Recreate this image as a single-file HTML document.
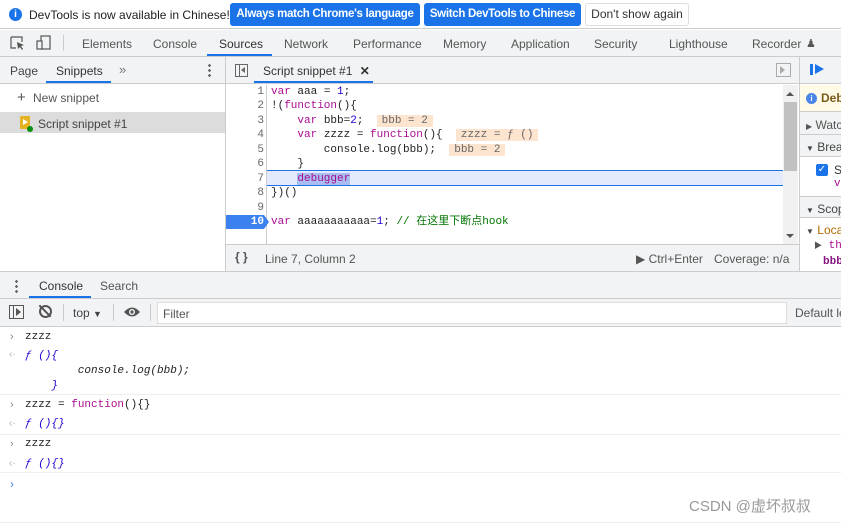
<!DOCTYPE html><html><head><meta charset="utf-8"><style>
*{margin:0;padding:0;box-sizing:border-box}
body{width:841px;height:523px;overflow:hidden;background:#fff;font-family:"Liberation Sans",sans-serif;font-size:12px;color:#333;position:relative}
.a{position:absolute;white-space:nowrap}
.m{font-family:"Liberation Mono","Noto Sans CJK SC",monospace;font-size:11px;white-space:pre}
.k{color:#aa0d91}.n{color:#1c00cf}.c{color:#007400}
.bd{background:#fde4cf;color:#666;padding:0 5px}
.t{font-size:12px;color:#555;top:37px}
</style></head><body>
<!-- infobar -->
<div class="a" style="left:0;top:0;width:841px;height:29px;border-bottom:1px solid #ccc;background:#fff"></div>
<div class="a" style="left:9px;top:8px;width:13px;height:13px;border-radius:50%;background:#1a73e8;color:#fff;font-size:10px;font-weight:bold;text-align:center;line-height:13px">i</div>
<div class="a" style="left:29px;top:8px;font-size:12px;color:#222">DevTools is now available in Chinese!</div>
<div class="a" style="left:230px;top:3px;width:190px;height:23px;background:#1a73e8;border-radius:3px;color:#fff;font-weight:bold;font-size:11.5px;line-height:23px;text-align:center;letter-spacing:-0.3px">Always match Chrome's language</div>
<div class="a" style="left:424px;top:3px;width:157px;height:23px;background:#1a73e8;border-radius:3px;color:#fff;font-weight:bold;font-size:11.5px;line-height:23px;text-align:center;letter-spacing:-0.3px">Switch DevTools to Chinese</div>
<div class="a" style="left:585px;top:3px;width:104px;height:23px;border:1px solid #ddd;border-radius:3px;color:#333;font-size:12px;line-height:21px;text-align:center">Don't show again</div>
<!-- main tabs -->
<div class="a" style="left:0;top:30px;width:841px;height:27px;background:#f1f3f4;border-bottom:1px solid #ccc"></div>
<svg class="a" style="left:10px;top:36px" width="16" height="15"><path d="M1 1h11v5M1 1v11h5" stroke="#555" fill="none" stroke-width="1.2"/><path d="M7 6l7 3-3 1 2 3-1 1-2-3-2 2z" fill="#555"/></svg>
<svg class="a" style="left:36px;top:35px" width="16" height="16"><rect x="5" y="1" width="9" height="13" stroke="#555" fill="none" stroke-width="1.2"/><rect x="1" y="6" width="5" height="8" stroke="#555" fill="#f1f3f4" stroke-width="1.2"/></svg>
<div class="a" style="left:63px;top:35px;width:1px;height:16px;background:#ccc"></div>
<div class="a t" style="left:82px">Elements</div>
<div class="a t" style="left:153px">Console</div>
<div class="a t" style="left:219px;color:#333">Sources</div>
<div class="a" style="left:207px;top:54px;width:65px;height:2px;background:#1a73e8"></div>
<div class="a t" style="left:284px">Network</div>
<div class="a t" style="left:353px">Performance</div>
<div class="a t" style="left:443px">Memory</div>
<div class="a t" style="left:511px">Application</div>
<div class="a t" style="left:594px">Security</div>
<div class="a t" style="left:669px">Lighthouse</div>
<div class="a t" style="left:752px">Recorder</div>
<div class="a" style="left:806px;top:37px;color:#555;font-size:11px">♟</div>
<!-- left panel -->
<div class="a" style="left:0;top:57px;width:225px;height:27px;background:#f1f3f4;border-bottom:1px solid #ccc"></div>
<div class="a" style="left:225px;top:57px;width:1px;height:214px;background:#ccc"></div>
<div class="a" style="left:10px;top:64px;color:#444;font-size:12px">Page</div>
<div class="a" style="left:56px;top:64px;color:#333;font-size:12px">Snippets</div>
<div class="a" style="left:46px;top:81px;width:65px;height:2px;background:#1a73e8"></div>
<div class="a" style="left:119px;top:62px;color:#777;font-size:13px">»</div>
<div class="a" style="left:208px;top:63px;width:3px;height:14px;background:radial-gradient(circle,#666 1.3px,transparent 1.4px) 0 0/3px 5px"></div>
<div class="a" style="left:17px;top:89px;color:#555;font-size:15px">+</div>
<div class="a" style="left:33px;top:91px;color:#555;font-size:12px">New snippet</div>
<div class="a" style="left:0;top:112px;width:225px;height:21px;background:#dcdcdc"></div>
<div class="a" style="left:20px;top:116px;width:10px;height:13px;background:#e6b422;border-radius:1px"></div>
<div class="a" style="left:23px;top:119px;width:0;height:0;border-left:5px solid #fff;border-top:3px solid transparent;border-bottom:3px solid transparent"></div>
<div class="a" style="left:27px;top:126px;width:6px;height:6px;border-radius:50%;background:#0a8f0a"></div>
<div class="a" style="left:38px;top:117px;color:#444;font-size:12px">Script snippet #1</div>
<!-- editor tab bar -->
<div class="a" style="left:226px;top:57px;width:573px;height:27px;background:#f1f3f4;border-bottom:1px solid #ccc"></div>
<div class="a" style="left:235px;top:64px;width:13px;height:13px;border:1px solid #666"></div>
<div class="a" style="left:239px;top:64px;width:1px;height:13px;background:#666"></div>
<div class="a" style="left:241px;top:67px;border-right:4px solid #666;border-top:3px solid transparent;border-bottom:3px solid transparent"></div>
<div class="a" style="left:263px;top:64px;color:#333;font-size:12px">Script snippet #1 <b style="margin-left:4px">✕</b></div>
<div class="a" style="left:254px;top:81px;width:119px;height:2px;background:#1a73e8"></div>
<div class="a" style="left:776px;top:63px;width:15px;height:14px;border:1px solid #aaa"></div>
<div class="a" style="left:780px;top:66px;border-left:5px solid #aaa;border-top:4px solid transparent;border-bottom:4px solid transparent"></div>
<!-- code -->
<div class="a" style="left:266px;top:85px;width:1px;height:159px;background:#ccc"></div>
<div class="a" style="left:267px;top:170px;width:516px;height:16px;background:#e3eafb;border-top:1px solid #1a73e8;border-bottom:1px solid #1a73e8"></div>
<div class="a" style="left:226px;top:215px;width:38px;height:14px;background:#3b82f0"></div>
<div class="a" style="left:264px;top:215px;border-left:5px solid #3b82f0;border-top:7px solid transparent;border-bottom:7px solid transparent"></div>
<div class="a m" style="left:226px;top:85px;width:38px;text-align:right;color:#666;line-height:14.45px">1
2
3
4
5
6
7
8
9
<b style="color:#fff">10</b></div>
<div class="a m" style="left:271px;top:85px;line-height:14.45px;color:#222"><span class="k">var</span> aaa = <span class="n">1</span>;
!(<span class="k">function</span>(){
    <span class="k">var</span> bbb=<span class="n">2</span>;  <span class="bd">bbb = 2</span>
    <span class="k">var</span> zzzz = <span class="k">function</span>(){  <span class="bd">zzzz = ƒ ()</span>
        console.log(bbb);  <span class="bd">bbb = 2</span>
    }
    <span class="k" style="background:#a8bdf0">debugger</span>
})()

<span class="k">var</span> aaaaaaaaaaa=<span class="n">1</span>; <span class="c">// 在这里下断点hook</span></div>
<!-- scrollbar -->
<div class="a" style="left:783px;top:85px;width:15px;height:159px;background:#f1f1f1"></div>
<div class="a" style="left:786px;top:92px;border-bottom:4px solid #555;border-left:4px solid transparent;border-right:4px solid transparent"></div>
<div class="a" style="left:784px;top:102px;width:13px;height:69px;background:#c1c1c1"></div>
<div class="a" style="left:786px;top:234px;border-top:4px solid #555;border-left:4px solid transparent;border-right:4px solid transparent"></div>
<!-- status -->
<div class="a" style="left:226px;top:244px;width:573px;height:27px;background:#f1f3f4;border-top:1px solid #ccc"></div>
<div class="a" style="left:235px;top:250px;color:#555;font-weight:bold;font-size:12px">{ }</div>
<div class="a" style="left:265px;top:252px;color:#555;font-size:12px">Line 7, Column 2</div>
<div class="a" style="left:636px;top:252px;color:#555;font-size:12px">▶ Ctrl+Enter</div>
<div class="a" style="left:714px;top:252px;color:#555;font-size:12px">Coverage: n/a</div>
<!-- right panel -->
<div class="a" style="left:799px;top:57px;width:1px;height:214px;background:#ccc"></div>
<div class="a" style="left:800px;top:57px;width:41px;height:27px;background:#f1f3f4;border-bottom:1px solid #ccc"></div>
<div class="a" style="left:810px;top:64px;width:3px;height:11px;background:#1a73e8"></div>
<div class="a" style="left:815px;top:64px;border-left:9px solid #1a73e8;border-top:5.5px solid transparent;border-bottom:5.5px solid transparent"></div>
<div class="a" style="left:800px;top:85px;width:41px;height:27px;background:#fffbe6;border-bottom:1px solid #ccc"></div>
<div class="a" style="left:806px;top:93px;width:11px;height:11px;border-radius:50%;background:#4a86e8;color:#fff;font-size:8px;font-weight:bold;text-align:center;line-height:11px">i</div>
<div class="a" style="left:821px;top:91px;color:#7a5a1a;font-weight:bold;font-size:12px">Deb</div>
<div class="a" style="left:800px;top:112px;width:41px;height:23px;background:#f1f3f4;border-bottom:1px solid #ccc"></div>
<div class="a" style="left:806px;top:118px;color:#555;font-size:12px"><span style="font-size:8px">▶</span> Watc</div>
<div class="a" style="left:800px;top:135px;width:41px;height:22px;background:#f1f3f4;border-bottom:1px solid #ccc"></div>
<div class="a" style="left:806px;top:140px;color:#444;font-size:12px"><span style="font-size:8px">▼</span> Brea</div>
<div class="a" style="left:816px;top:164px;width:12px;height:12px;background:#1a73e8;border-radius:2px;color:#fff;font-size:10px;text-align:center;line-height:12px">✓</div>
<div class="a" style="left:834px;top:163px;color:#333">S</div>
<div class="a m" style="left:834px;top:178px;color:#aa0d91">v</div>
<div class="a" style="left:800px;top:196px;width:41px;height:22px;background:#f1f3f4;border-top:1px solid #ccc;border-bottom:1px solid #ccc"></div>
<div class="a" style="left:806px;top:202px;color:#444;font-size:12px"><span style="font-size:8px">▼</span> Scop</div>
<div class="a" style="left:806px;top:223px;color:#444;font-size:12px"><span style="font-size:8px">▼</span> <span style="color:#b36b00">Loca</span></div>
<div class="a m" style="left:814px;top:240px;color:#555"><span style="font-size:8px">▶</span> <span class="k">thi</span></div>
<div class="a m" style="left:823px;top:256px;color:#881280;font-weight:bold">bbb</div>
<!-- drawer -->
<div class="a" style="left:0;top:271px;width:841px;height:28px;background:#f1f3f4;border-top:1px solid #ccc;border-bottom:1px solid #ccc"></div>
<div class="a" style="left:15px;top:279px;width:3px;height:14px;background:radial-gradient(circle,#666 1.3px,transparent 1.4px) 0 0/3px 5px"></div>
<div class="a" style="left:39px;top:279px;color:#333;font-size:12px">Console</div>
<div class="a" style="left:29px;top:296px;width:62px;height:2px;background:#1a73e8"></div>
<div class="a" style="left:100px;top:279px;color:#555;font-size:12px">Search</div>
<div class="a" style="left:0;top:299px;width:841px;height:28px;background:#f1f3f4;border-bottom:1px solid #ccc"></div>
<div class="a" style="left:9px;top:305px;width:15px;height:14px;border:1px solid #555"></div>
<div class="a" style="left:13px;top:305px;width:1px;height:14px;background:#555"></div>
<div class="a" style="left:16px;top:308px;border-left:5px solid #555;border-top:4px solid transparent;border-bottom:4px solid transparent"></div>
<div class="a" style="left:39px;top:305px;width:13px;height:13px;border:2px solid #555;border-radius:50%"></div>
<div class="a" style="left:44px;top:303px;width:2px;height:16px;background:#555;transform:rotate(-45deg)"></div>
<div class="a" style="left:63px;top:304px;width:1px;height:17px;background:#ccc"></div>
<div class="a" style="left:73px;top:306px;color:#444;font-size:12px">top <span style="font-size:9px">▼</span></div>
<div class="a" style="left:113px;top:304px;width:1px;height:17px;background:#ccc"></div>
<svg class="a" style="left:123px;top:305px" width="18" height="14"><path d="M1 7Q9-2 17 7Q9 16 1 7z" fill="#555"/><circle cx="9" cy="7" r="3" fill="#f1f3f4"/><circle cx="9" cy="7" r="1.6" fill="#555"/></svg>
<div class="a" style="left:150px;top:304px;width:1px;height:17px;background:#ccc"></div>
<div class="a" style="left:157px;top:302px;width:630px;height:22px;background:#fff;border:1px solid #ddd"></div>
<div class="a" style="left:163px;top:307px;color:#555;font-size:12px">Filter</div>
<div class="a" style="left:795px;top:306px;color:#555;font-size:12px">Default le</div>
<!-- console rows -->
<div class="a" style="left:10px;top:331px;color:#888;font-size:11px">›</div>
<div class="a m" style="left:25px;top:331px;color:#222">zzzz</div>
<div class="a" style="left:9px;top:349px;color:#aaa;font-size:10px">‹·</div>
<div class="a m" style="left:25px;top:349px;font-style:italic;color:#1c00cf;line-height:15px">ƒ (){
<span style="color:#222">        console.log(bbb);</span>
    }</div>
<div class="a" style="left:0;top:394px;width:841px;height:1px;background:#eee"></div>
<div class="a" style="left:10px;top:399px;color:#888;font-size:11px">›</div>
<div class="a m" style="left:25px;top:399px;color:#222">zzzz = <span class="k">function</span>(){}</div>
<div class="a" style="left:9px;top:418px;color:#aaa;font-size:10px">‹·</div>
<div class="a m" style="left:25px;top:418px;font-style:italic;color:#1c00cf">ƒ (){}</div>
<div class="a" style="left:0;top:434px;width:841px;height:1px;background:#eee"></div>
<div class="a" style="left:10px;top:438px;color:#888;font-size:11px">›</div>
<div class="a m" style="left:25px;top:438px;color:#222">zzzz</div>
<div class="a" style="left:9px;top:458px;color:#aaa;font-size:10px">‹·</div>
<div class="a m" style="left:25px;top:458px;font-style:italic;color:#1c00cf">ƒ (){}</div>
<div class="a" style="left:0;top:472px;width:841px;height:1px;background:#eee"></div>
<div class="a" style="left:10px;top:477px;color:#4a86e8;font-size:12px">›</div>
<div class="a" style="left:0;top:522px;width:841px;height:1px;background:#eee"></div>
<div class="a" style="left:689px;top:495px;color:#999;font-family:'Liberation Sans','Noto Sans CJK SC',sans-serif;font-size:15px">CSDN @虚坏叔叔</div>
</body></html>
